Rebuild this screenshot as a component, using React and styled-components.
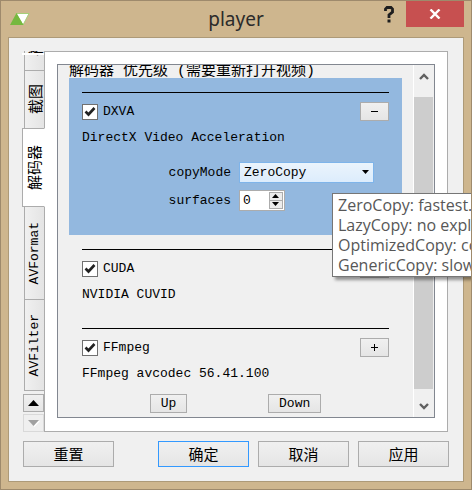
import React, { useState } from "react";
import styled, { createGlobalStyle, css } from "styled-components";

const mono = '"Liberation Mono", "Noto Sans CJK SC", monospace';
const cjk = '"Noto Sans CJK SC", "Liberation Mono", sans-serif';

const GlobalStyle = createGlobalStyle`
  *, *::before, *::after { box-sizing: border-box; }
  body { margin: 0; background: #ceb68e; }
  button, input, select { font: inherit; color: inherit; margin: 0; padding: 0; }
`;

const Window = styled.div`
  display: flex;
  flex-direction: column;
  min-height: 100vh;
  overflow: hidden;
  padding: 0 7px 7px;
  background: #ceb68e;
  border: 1px solid #9e8a6c;
  color: #000;
  font: 13px/20px ${mono};
`;

const TitleBar = styled.header`
  display: grid;
  grid-template-columns: 1fr auto 1fr;
  height: 36px;
`;

const AppMark = styled.svg`
  width: 20px;
  height: 12px;
  margin: 12px 0 0 2px;
`;

const Title = styled.h1`
  margin: 0;
  font: 400 19px/36px "Noto Sans", sans-serif;
  color: #2b2b2b;
`;

const TitleActions = styled.div`
  display: flex;
  justify-content: flex-end;
  align-items: flex-start;
`;

const HelpButton = styled.button`
  display: flex;
  justify-content: center;
  width: 34px;
  height: 26px;
  padding-top: 5px;
  border: 0;
  background: none;
`;

const CloseButton = styled.button`
  display: grid;
  place-items: center;
  width: 58px;
  height: 26px;
  border: 0;
  background: #c75050;
`;

const Client = styled.main`
  flex: 1;
  display: flex;
  flex-direction: column;
  padding: 13px 15px 14px 13px;
  background: #f0f0f0;
  border: 1px solid #ad9a78;
`;

const TabArea = styled.div`
  flex: 1;
  display: flex;
`;

const TabStrip = styled.div`
  position: relative;
  z-index: 1;
  display: flex;
  flex-direction: column;
  width: 23px;
  margin-right: -1px;
`;

const TearLine = styled.span`
  position: absolute;
  top: 2px;
  left: 0;
  right: 1px;
  height: 2px;
  background: #fff;
`;

const TabList = styled.div`
  display: flex;
  flex-direction: column;
  align-items: flex-end;
  overflow: hidden;
  flex: 0 0 340px;
  justify-content: flex-end;
`;

const Tab = styled.button`
  display: flex;
  flex: none;
  align-items: center;
  justify-content: center;
  width: ${(p) => (p.$active ? 23 : 21)}px;
  height: ${(p) => p.$length}px;
  border: 1px solid #acacac;
  border-bottom-width: ${(p) => (p.$last || p.$active ? 1 : 0)}px;
  background: linear-gradient(90deg, #f0f0f0, #e4e4e4);
  ${(p) =>
    p.$active &&
    css`
      border-right-color: #fff;
      background: #fff;
    `}
  ${(p) => p.$afterActive && "border-top: 0;"}
`;

const TabText = styled.span`
  writing-mode: vertical-rl;
  text-orientation: sideways;
  transform: rotate(180deg);
  white-space: nowrap;
  font: ${(p) => (p.$latin ? `13px/18px ${mono}` : `15px/18px ${cjk}`)};
`;

const TabScroll = styled.button`
  display: grid;
  place-items: center;
  width: 21px;
  height: 18px;
  margin: ${(p) => (p.disabled ? 2 : 3)}px 0 0 1px;
  border: 1px solid ${(p) => (p.disabled ? "#d9d9d9" : "#acacac")};
  background: ${(p) => (p.disabled ? "#efefef" : "linear-gradient(#f0f0f0, #e5e5e5)")};
  color: ${(p) => (p.disabled ? "#a0a0a0" : "#000")};
`;

const Pane = styled.section`
  flex: 1;
  display: flex;
  min-width: 0;
  padding: 12px 12px 13px;
  background: #fff;
  border: 1px solid #acacac;
`;

const ScrollFrame = styled.div`
  flex: 1;
  display: flex;
  min-width: 0;
  background: #f0f0f0;
  border: 1px solid #828790;
`;

const ScrollContent = styled.div`
  flex: 1;
  min-width: 0;
  padding: 0 11px;
`;

const ListHeading = styled.h2`
  height: 13px;
  margin: 0;
  overflow: hidden;
  white-space: pre;
  font: 400 15px/13px ${mono};
`;

const List = styled.ul`
  margin: 0;
  padding: 0;
  list-style: none;
`;

const Item = styled.li`
  padding: 14px 13px 10px;
  background: ${(p) => (p.$selected ? "#93b8df" : "transparent")};
`;

const Rule = styled.hr`
  height: 1px;
  margin: 0 0 9px;
  border: 0;
  background: #000;
`;

const ItemHead = styled.div`
  display: flex;
  justify-content: space-between;
  align-items: center;
  height: 19px;
`;

const CheckLabel = styled.label`
  display: flex;
  align-items: center;
  gap: 5px;
`;

const Overlay = styled.span`
  display: grid;
  align-items: center;
  & > * {
    grid-area: 1 / 1;
  }
  & > svg {
    pointer-events: none;
  }
`;

const CheckInput = styled.input`
  appearance: none;
  width: 16px;
  height: 16px;
  border: 1px solid #707070;
  background: #fff;
  &:not(:checked) + svg {
    visibility: hidden;
  }
`;

const Button = styled.button`
  height: 19px;
  padding: 0 10px;
  border: 1px solid #acacac;
  background: linear-gradient(#f0f0f0, #e5e5e5);
  line-height: 17px;
`;

const ToggleButton = styled(Button)`
  display: grid;
  place-items: center;
  width: 29px;
  padding: 0;
`;

const Description = styled.p`
  margin: 7px 0 0;
  line-height: 19px;
`;

const Options = styled.div`
  display: grid;
  grid-template-columns: auto 135px;
  justify-content: end;
  align-items: center;
  gap: 7px 8px;
  margin: 15px 15px 14px 0;
`;

const OptionLabel = styled.label`
  line-height: 20px;
  text-align: right;
`;

const SelectBox = styled(Overlay)`
  position: relative;
  & > svg {
    justify-self: end;
    margin-right: 4px;
  }
`;

const Select = styled.select`
  appearance: none;
  width: 100%;
  height: 21px;
  padding-left: 4px;
  border: 1px solid #7eb4ea;
  border-radius: 0;
  background: linear-gradient(#ebf4fc, #dcecfc);
  outline: none;
`;

const Spin = styled.span`
  display: flex;
  width: 46px;
  height: 21px;
  padding: 1px;
  border: 1px solid #acacac;
  background: #fff;
`;

const SpinInput = styled.input`
  flex: 1;
  min-width: 0;
  padding-left: 2px;
  border: 0;
  background: none;
  outline: none;
`;

const SpinButtons = styled.span`
  display: grid;
  grid-template-rows: 9px 8px;
  width: 14px;
`;

const SpinButton = styled.button`
  display: grid;
  place-items: center;
  border: 1px solid #acacac;
  background: #ececec;
  & + & {
    border-top: 0;
  }
`;

const Tooltip = styled.div`
  position: absolute;
  z-index: 2;
  top: 31px;
  left: 93px;
  padding: 1px 5px;
  border: 1px solid #767676;
  background: #fff;
  box-shadow: 3px 3px 3px rgba(0, 0, 0, 0.4);
  color: #575757;
  font: 16px/20px "Open Sans", "Noto Sans", sans-serif;
  white-space: pre;
`;

const OrderActions = styled.div`
  display: flex;
  justify-content: space-evenly;
  padding-top: 1px;
`;

const ScrollBar = styled.div`
  display: flex;
  flex-direction: column;
  width: 21px;
  padding-right: 1px;
  border-left: 1px solid #fff;
`;

const ScrollArrow = styled.button`
  display: grid;
  place-items: center;
  flex: none;
  height: ${(p) => (p.$end ? 28 : 32)}px;
  padding-bottom: ${(p) => (p.$end ? 0 : 10)}px;
  padding-top: ${(p) => (p.$end ? 6 : 0)}px;
  border: 0;
  background: none;
`;

const ScrollThumb = styled.div`
  flex: 1;
  background: #cdcdcd;
`;

const Footer = styled.footer`
  display: flex;
  gap: 9px;
  margin: 9px -1px 0 1px;
`;

const DialogButton = styled(Button)`
  width: 91px;
  height: 26px;
  border-color: ${(p) => (p.$primary ? "#3399ff" : "#acacac")};
  font: 15px/22px ${cjk};
  &:first-child {
    margin-right: auto;
  }
`;

const Triangle = ({ down, small, shaded }) => {
  const w = small ? 7 : 11;
  const h = small ? 4 : 6;
  const shape = down ? `M0 0H${w}L${w / 2} ${h}Z` : `M0 ${h}H${w}L${w / 2} 0Z`;
  return (
    <svg width={w + 1} height={h + 1} viewBox={`0 0 ${w + 1} ${h + 1}`} aria-hidden="true">
      {shaded && <path d={shape} fill="#fff" transform="translate(1 1)" />}
      <path d={shape} fill="currentColor" />
    </svg>
  );
};

const Chevron = ({ down }) => (
  <svg width="10" height="7" viewBox="0 0 10 7" aria-hidden="true">
    <path d={down ? "M1 1L5 5L9 1" : "M1 6L5 2L9 6"} fill="none" stroke="#606060" strokeWidth="2.4" />
  </svg>
);

const Tick = () => (
  <svg width="16" height="16" viewBox="0 0 16 16" aria-hidden="true">
    <path d="M3.5 7.5L6.5 10.5L12.5 4" fill="none" stroke="#212121" strokeWidth="2.6" />
  </svg>
);

const Decoder = ({ name, description, enabled, selected, children }) => (
  <Item $selected={selected}>
    <Rule />
    <ItemHead>
      <CheckLabel>
        <Overlay>
          <CheckInput type="checkbox" defaultChecked />
          <Tick />
        </Overlay>
        {name}
      </CheckLabel>
      <ToggleButton type="button" aria-label={enabled ? "Collapse" : "Expand"}>
        <svg width="7" height="7" viewBox="0 0 7 7" aria-hidden="true">
          <path d={enabled ? "M0 3.5H7" : "M0 3.5H7M3.5 0V7"} stroke="#000" />
        </svg>
      </ToggleButton>
    </ItemHead>
    <Description>{description}</Description>
    {children}
  </Item>
);

const tabs = [
  { text: "视频", length: 58 },
  { text: "截图", length: 58 },
  { text: "解码器", length: 79 },
  { text: "AVFormat", length: 92, latin: true },
  { text: "AVFilter", length: 92, latin: true },
];

const hint = [
  "ZeroCopy: fastest. Direct rendering without data copy.",
  "LazyCopy: no explicitly additional copy.",
  "OptimizedCopy: copy from USWC memory optimized.",
  "GenericCopy: slowest. Generic cpu copy.",
].join("\n");

export default function App() {
  const [active, setActive] = useState(2);
  const [surfaces, setSurfaces] = useState(0);

  return (
    <>
      <GlobalStyle />
      <Window>
        <TitleBar>
          <AppMark viewBox="0 0 20 12" aria-hidden="true">
            <path d="M6 0.5H19L13 12Z" fill="#fff" stroke="#a5cf78" />
            <path d="M0 12L6.5 0L13.5 12Z" fill="#76b83f" />
          </AppMark>
          <Title>player</Title>
          <TitleActions>
            <HelpButton type="button" aria-label="Help">
              <svg width="10" height="17" viewBox="0 0 10 17" aria-hidden="true">
                <path d="M1.5 5V3L3 1.5H7L8.5 3V6L5 9V12" fill="none" stroke="#1e1e1e" strokeWidth="2.8" />
                <path d="M3.5 13.5H6.5V16.5H3.5Z" fill="#1e1e1e" />
              </svg>
            </HelpButton>
            <CloseButton type="button" aria-label="Close">
              <svg width="12" height="10" viewBox="0 0 12 10" aria-hidden="true">
                <path d="M1.5 0.5L10.5 9.5M10.5 0.5L1.5 9.5" stroke="#fff" strokeWidth="2.4" />
              </svg>
            </CloseButton>
          </TitleActions>
        </TitleBar>
        <Client>
          <TabArea>
            <TabStrip>
              <TabList role="tablist" aria-orientation="vertical">
                {tabs.map((tab, i) => (
                  <Tab
                    key={tab.text}
                    type="button"
                    role="tab"
                    aria-selected={i === active}
                    $active={i === active}
                    $afterActive={i === active + 1}
                    $last={i === tabs.length - 1}
                    $length={tab.length}
                    onClick={() => setActive(i)}
                  >
                    <TabText $latin={tab.latin}>{tab.text}</TabText>
                  </Tab>
                ))}
              </TabList>
              <TearLine />
              <TabScroll type="button" aria-label="Scroll tabs up">
                <Triangle />
              </TabScroll>
              <TabScroll type="button" aria-label="Scroll tabs down" disabled>
                <Triangle down shaded />
              </TabScroll>
            </TabStrip>
            <Pane role="tabpanel">
              <ScrollFrame>
                <ScrollContent>
                  <ListHeading>解码器 优先级 (需要重新打开视频)</ListHeading>
                  <List>
                    <Decoder name="DXVA" description="DirectX Video Acceleration" enabled selected>
                      <Options>
                        <OptionLabel htmlFor="copyMode">copyMode</OptionLabel>
                        <SelectBox>
                          <Select id="copyMode" defaultValue="ZeroCopy" aria-describedby="copyHint">
                            <option>ZeroCopy</option>
                            <option>LazyCopy</option>
                            <option>OptimizedCopy</option>
                            <option>GenericCopy</option>
                          </Select>
                          <Triangle down small />
                          <Tooltip id="copyHint" role="tooltip">
                            {hint}
                          </Tooltip>
                        </SelectBox>
                        <OptionLabel htmlFor="surfaces">surfaces</OptionLabel>
                        <Spin>
                          <SpinInput
                            id="surfaces"
                            inputMode="numeric"
                            value={surfaces}
                            onChange={(e) => setSurfaces(Number(e.target.value) || 0)}
                          />
                          <SpinButtons>
                            <SpinButton type="button" aria-label="Increase" onClick={() => setSurfaces(surfaces + 1)}>
                              <Triangle small />
                            </SpinButton>
                            <SpinButton
                              type="button"
                              aria-label="Decrease"
                              onClick={() => setSurfaces(Math.max(0, surfaces - 1))}
                            >
                              <Triangle small down />
                            </SpinButton>
                          </SpinButtons>
                        </Spin>
                      </Options>
                    </Decoder>
                    <Decoder name="CUDA" description="NVIDIA CUVID" />
                    <Decoder name="FFmpeg" description="FFmpeg avcodec 56.41.100" />
                  </List>
                  <OrderActions>
                    <Button type="button">Up</Button>
                    <Button type="button">Down</Button>
                  </OrderActions>
                </ScrollContent>
                <ScrollBar>
                  <ScrollArrow type="button" aria-label="Scroll up">
                    <Chevron />
                  </ScrollArrow>
                  <ScrollThumb />
                  <ScrollArrow type="button" aria-label="Scroll down" $end>
                    <Chevron down />
                  </ScrollArrow>
                </ScrollBar>
              </ScrollFrame>
            </Pane>
          </TabArea>
          <Footer>
            <DialogButton type="button">重置</DialogButton>
            <DialogButton type="button" $primary>
              确定
            </DialogButton>
            <DialogButton type="button">取消</DialogButton>
            <DialogButton type="button">应用</DialogButton>
          </Footer>
        </Client>
      </Window>
    </>
  );
}
